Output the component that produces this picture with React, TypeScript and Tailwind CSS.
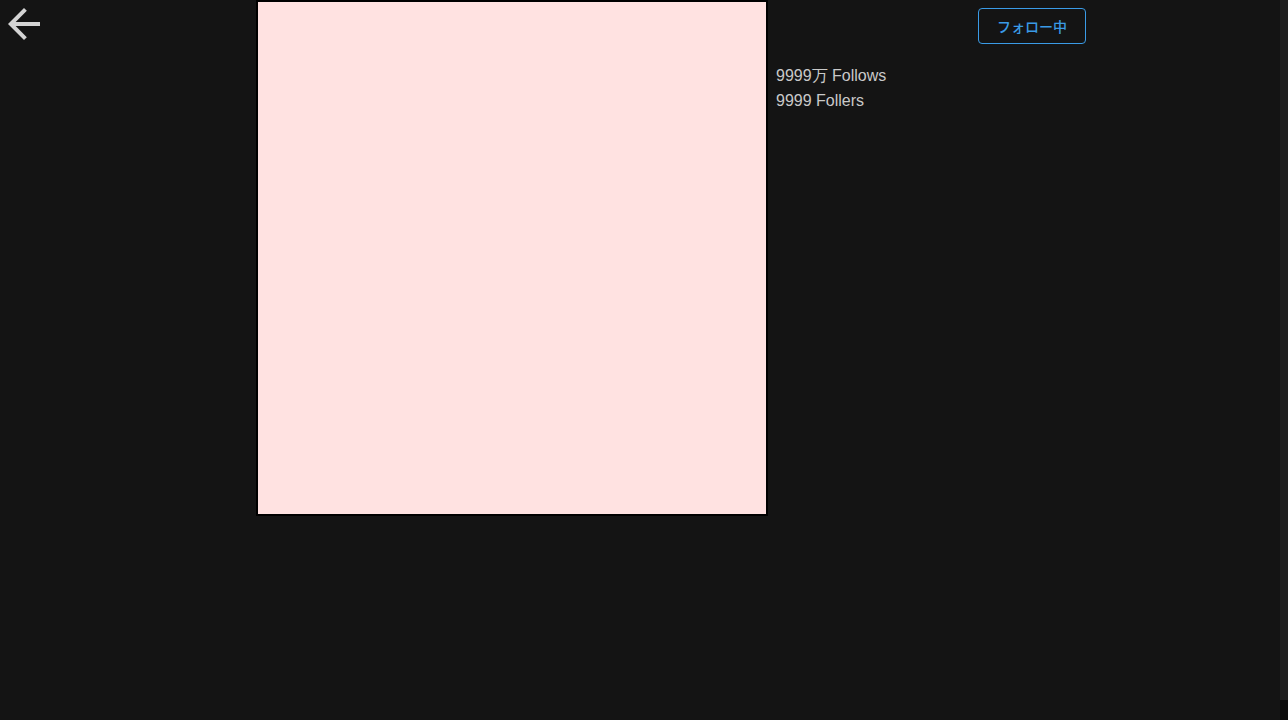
import React from "react";
import { MdArrowBack } from "react-icons/md";

const App = () => {
  return (
    <div className="flex h-[720px] w-full bg-[#141414] font-['Liberation_Sans',sans-serif]">
      <div className="flex flex-1">
        {/* left: back button */}
        <div className="w-[256px] shrink-0">
          <button className="block text-[#d4d4d4]">
            <MdArrowBack size={48} />
          </button>
        </div>

        {/* center: picture */}
        <div className="w-[512px] shrink-0">
          <div className="h-[516px] w-[512px] border-2 border-black bg-[#ffe2e1]" />
        </div>

        {/* right: profile */}
        <div className="flex-1 pl-2 pt-2">
          <button className="ml-[202px] flex h-[36px] w-[108px] items-center justify-center rounded-[4px] border border-[#3a9be6] font-['Noto_Sans_CJK_JP',sans-serif] text-[14px] font-medium text-[#3a9be6]">
            フォロー中
          </button>
          <div className="mt-[19px] text-[16px] leading-[25px] text-[#c9c9c9]">
            <div>9999万 Follows</div>
            <div>9999 Follers</div>
          </div>
        </div>
      </div>

      {/* scrollbar */}
      <div className="flex w-2 shrink-0 flex-col bg-[#0b0b0b]">
        <div className="h-[700px] bg-[#1f1f1f]" />
      </div>
    </div>
  );
};

export default App;
